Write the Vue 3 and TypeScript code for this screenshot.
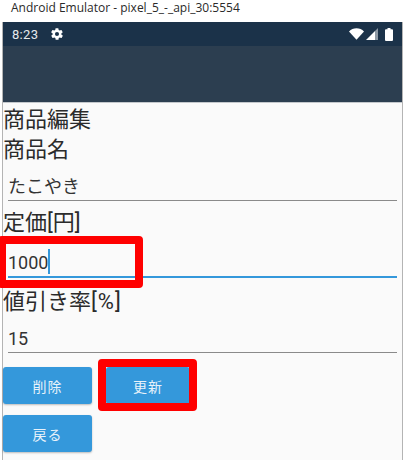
<script setup lang="ts">
const fontNote: string = 'emulator'
void fontNote
</script>

<template>
  <div class="window">
    <div class="titlebar">Android Emulator - pixel_5_-_api_30:5554</div>
    <div class="device">
      <div class="status">
        <span class="time">8:23</span>
        <svg class="gear" width="14" height="14" viewBox="0 0 24 24"><path fill="#fff" d="M19.4 13a7.6 7.6 0 0 0 0-2l2.1-1.6a.5.5 0 0 0 .1-.7l-2-3.4a.5.5 0 0 0-.6-.2l-2.5 1a7.3 7.3 0 0 0-1.7-1l-.4-2.7a.5.5 0 0 0-.5-.4h-4a.5.5 0 0 0-.5.4l-.4 2.7a7.3 7.3 0 0 0-1.7 1l-2.5-1a.5.5 0 0 0-.6.2l-2 3.4a.5.5 0 0 0 .1.7L4.6 11a7.6 7.6 0 0 0 0 2l-2.1 1.6a.5.5 0 0 0-.1.7l2 3.4a.5.5 0 0 0 .6.2l2.5-1a7.3 7.3 0 0 0 1.7 1l.4 2.7a.5.5 0 0 0 .5.4h4a.5.5 0 0 0 .5-.4l.4-2.7a7.3 7.3 0 0 0 1.7-1l2.5 1a.5.5 0 0 0 .6-.2l2-3.4a.5.5 0 0 0-.1-.7zM12 15.5a3.5 3.5 0 1 1 0-7 3.5 3.5 0 0 1 0 7z"/></svg>
        <span class="spacer"></span>
        <svg class="wifi" width="15" height="12" viewBox="0 0 15 12"><path fill="#fff" d="M0 3.600C2 1.400 4.600.3 7.500.3s5.500 1.100 7.500 3.300L7.500 11.700z"/></svg>
        <svg class="signal" width="12" height="12" viewBox="0 0 12 12"><path fill="#fff" d="M0 12 9 3v9z"/><path fill="#8d99a5" d="M9 3 12 0v12H9z"/></svg>
        <svg class="battery" width="8" height="13" viewBox="0 0 8 13"><path fill="#fff" d="M2.500 0h3v1.200H7a1 1 0 0 1 1 1V12a1 1 0 0 1-1 1H1a1 1 0 0 1-1-1V2.200a1 1 0 0 1 1-1h1.500z"/></svg>
      </div>
      <div class="appbar"></div>
      <div class="content">
        <div class="heading first">商品編集</div>
        <div class="heading">商品名</div>
        <div class="field"><span>たこやき</span></div>
        <div class="heading price">定価[円]</div>
        <div class="field focused"><span>1000</span><i class="caret"></i></div>
        <div class="heading rate">値引き率<span class="latin">[%]</span></div>
        <div class="field"><span>15</span></div>
        <div class="buttons">
          <button class="btn" type="button">削除</button>
          <button class="btn update" type="button">更新</button>
        </div>
        <button class="btn back" type="button">戻る</button>
        <div class="mark mark-input"></div>
        <div class="mark mark-button"></div>
      </div>
    </div>
  </div>
</template>

<style>
html, body { margin: 0; background: #fff; }
</style>

<style scoped>
.window {
  width: 406px;
  height: 460px;
  background: #fff;
  overflow: hidden;
}
.titlebar {
  height: 22px;
  padding-left: 11px;
  font: 12px/15px "Open Sans", "Liberation Sans", sans-serif;
  color: #2a2a2a;
  box-sizing: border-box;
}
.device {
  width: 399px;
  height: 438px;
  margin-left: 3px;
  border-right: 1px solid #b4b4b4;
  background: #fafafa;
  display: flex;
  flex-direction: column;
  box-shadow: -1px 0 0 #b4b4b4;
}
.status {
  height: 24px;
  flex: none;
  background: #1b3249;
  display: flex;
  align-items: center;
  padding: 0 9px 0 9px;
  color: #e6e9ec;
}
.time { font: 13px Roboto, sans-serif; letter-spacing: .3px; }
.gear { margin-left: 12px; }
.spacer { flex: 1; }
.wifi { margin-right: 2px; }
.signal { margin-right: 7px; }
.appbar {
  height: 57px;
  flex: none;
  background: #2c3e50;
  border-bottom: 1px solid #c4c8cc;
  box-sizing: border-box;
}
.content {
  position: relative;
  flex: 1;
  color: #2b2b2b;
  font-family: Roboto, "Noto Sans CJK JP", sans-serif;
}
.heading {
  font-size: 22px;
  line-height: 36px;
  height: 30px;
}
.latin { letter-spacing: 1px; }
.first { margin-top: -1px; }
.field {
  margin: 0 5px;
  height: 39px;
  box-sizing: border-box;
  border-bottom: 1px solid #8a8a8a;
  font-size: 18px;
  line-height: 22px;
  padding-top: 14px;
  display: flex;
  align-items: flex-start;
  color: #333;
}
.focused {
  height: 43px;
  padding-top: 17px;
  border-bottom: 2px solid #3498db;
}
.caret {
  width: 1.500px;
  height: 25px;
  margin-top: -3px;
  background: #3498db;
}
.price { margin-top: 4px; }
.rate { margin-top: 6px; }
.buttons {
  display: flex;
  gap: 14px;
  margin-top: 14px;
}
.btn {
  width: 89px;
  height: 37px;
  border: 0;
  border-radius: 3px;
  background: #3498db;
  color: #e8f2fa;
  font-size: 14px;
  font-family: Roboto, "Noto Sans CJK JP", sans-serif;
  letter-spacing: 1px;
  box-shadow: 0 1px 2px rgba(0, 0, 0, .25);
  padding: 0;
  display: block;
}
.update { width: 84px; }
.back { margin-top: 11px; }
.mark {
  position: absolute;
  box-sizing: border-box;
  border: 8px solid #f00;
  border-radius: 4px;
}
.mark-input {
  left: -5px;
  top: 133px;
  width: 145px;
  height: 52px;
}
.mark-button {
  left: 95px;
  top: 256px;
  width: 99px;
  height: 52px;
}
</style>
